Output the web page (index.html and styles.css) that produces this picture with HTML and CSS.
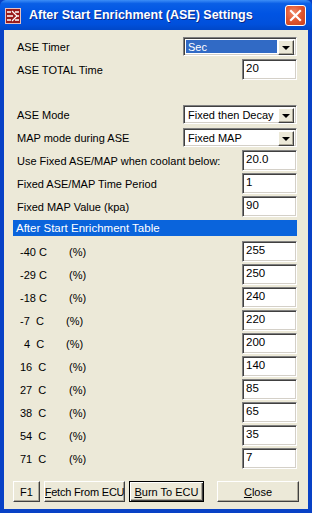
FILE: index.html
```html
<!DOCTYPE html>
<html>
<head>
<meta charset="utf-8">
<link rel="stylesheet" href="styles.css">
</head>
<body>
<div class="window">
  <div class="titlebar">
    <svg class="appicon" width="16" height="16" viewBox="0 0 16 16">
      <rect x="0" y="0" width="16" height="16" fill="#9b1c1c"/>
      <rect x="0.5" y="0.5" width="15" height="15" fill="none" stroke="#e8c0c0" stroke-width="1"/>
      <path d="M2 4h4M2 8h6M2 12h4M7 3l5 5-5 5M10 4h4M11 8h3M10 12h4" stroke="#fff" stroke-width="1.3" fill="none"/>
    </svg>
    <span class="title">After Start Enrichment (ASE) Settings</span>
    <div class="closebtn">
      <svg width="21" height="21" viewBox="0 0 21 21">
        <path d="M6 6l9 9M15 6l-9 9" stroke="#fff" stroke-width="2.2" stroke-linecap="square"/>
      </svg>
    </div>
  </div>
  <div class="body">
    <div class="row r-timer">
      <span class="label">ASE Timer</span>
      <div class="select wide selected"><span class="val">Sec</span><span class="drop"><i></i></span></div>
    </div>
    <div class="row r-total">
      <span class="label">ASE TOTAL Time</span>
      <div class="input">20</div>
    </div>
    <div class="row r-mode">
      <span class="label">ASE Mode</span>
      <div class="select wide"><span class="val">Fixed then Decay</span><span class="drop"><i></i></span></div>
    </div>
    <div class="row r-map">
      <span class="label">MAP mode during ASE</span>
      <div class="select wide"><span class="val">Fixed MAP</span><span class="drop"><i></i></span></div>
    </div>
    <div class="row r-field">
      <span class="label">Use Fixed ASE/MAP when coolant below:</span>
      <div class="input">20.0</div>
    </div>
    <div class="row r-field">
      <span class="label">Fixed ASE/MAP Time Period</span>
      <div class="input">1</div>
    </div>
    <div class="row r-field">
      <span class="label">Fixed MAP Value (kpa)</span>
      <div class="input">90</div>
    </div>
    <div class="header">After Start Enrichment Table</div>
    <div class="table">
      <div class="trow"><span class="temp">-40 C</span><span class="pct">(%)</span><div class="input">255</div></div>
      <div class="trow"><span class="temp">-29 C</span><span class="pct">(%)</span><div class="input">250</div></div>
      <div class="trow"><span class="temp">-18 C</span><span class="pct">(%)</span><div class="input">240</div></div>
      <div class="trow"><span class="temp">-7&nbsp; C</span><span class="pct short">(%)</span><div class="input">220</div></div>
      <div class="trow"><span class="temp ind">4&nbsp; C</span><span class="pct short">(%)</span><div class="input">200</div></div>
      <div class="trow"><span class="temp">16&nbsp; C</span><span class="pct">(%)</span><div class="input">140</div></div>
      <div class="trow"><span class="temp">27&nbsp; C</span><span class="pct">(%)</span><div class="input">85</div></div>
      <div class="trow"><span class="temp">38&nbsp; C</span><span class="pct">(%)</span><div class="input">65</div></div>
      <div class="trow"><span class="temp">54&nbsp; C</span><span class="pct">(%)</span><div class="input">35</div></div>
      <div class="trow"><span class="temp">71&nbsp; C</span><span class="pct">(%)</span><div class="input">7</div></div>
    </div>
    <div class="buttons">
      <div class="btn b-f1">F1</div>
      <div class="btn b-fetch"><u>F</u>etch From ECU</div>
      <div class="btn b-burn default"><u>B</u>urn To ECU</div>
      <div class="btn b-close"><u>C</u>lose</div>
    </div>
  </div>
</div>
</body>
</html>
```
FILE: styles.css
```css
* { box-sizing: border-box; }
html, body {
  margin: 0;
  padding: 0;
  width: 312px;
  height: 513px;
  overflow: hidden;
  background: #ece9d8;
}
body {
  font-family: "Liberation Sans", Arial, sans-serif;
  font-size: 11px;
  color: #000;
}
.window {
  width: 312px;
  height: 513px;
  display: flex;
  flex-direction: column;
  background: #0841c6;
}
.titlebar {
  height: 30px;
  flex: none;
  display: flex;
  align-items: center;
  padding: 0 6px 0 5px;
  background: linear-gradient(#3d8ef7 0%, #0a5fe6 12%, #0054e3 45%, #0050dc 80%, #0047c8 100%);
  border-radius: 6px 6px 0 0;
}
.appicon { flex: none; margin-top: 1px; }
.title {
  flex: 1;
  margin-left: 8px;
  color: #fff;
  font-weight: bold;
  font-size: 12.5px;
  text-shadow: 1px 1px 0 #0a2a8a;
  white-space: nowrap;
}
.closebtn {
  width: 21px;
  height: 21px;
  border: 1px solid #fff;
  border-radius: 3px;
  background: radial-gradient(circle at 40% 35%, #f08a6a 0%, #e0552e 50%, #c8401c 100%);
  display: flex;
  align-items: center;
  justify-content: center;
}
.closebtn svg { display: block; margin: -1px; }
.body {
  flex: 1;
  margin: 0 4px 4px 4px;
  background: #ece9d8;
  padding: 7px 11px 0 9px;
  display: flex;
  flex-direction: column;
}
.row {
  display: flex;
  align-items: center;
  justify-content: space-between;
}
.label { padding-left: 4px; white-space: nowrap; }
.r-timer { height: 19px; }
.r-total { height: 21px; margin-top: 3px; }
.r-mode { height: 19px; margin-top: 25px; }
.r-map { height: 19px; margin-top: 4px; }
.r-field { height: 21px; margin-top: 2px; }
.r-map + .r-field { margin-top: 3px; }

.input {
  width: 55px;
  height: 21px;
  background: #fff;
  border-top: 1px solid #808080;
  border-left: 1px solid #808080;
  border-bottom: 1px solid #fff;
  border-right: 1px solid #fff;
  box-shadow: inset 1px 1px 0 #404040, inset -1px -1px 0 #d4d0c8;
  padding: 1px 0 0 3px;
  font-size: 11.5px;
  line-height: 15px;
}
.select {
  width: 114px;
  height: 19px;
  background: #fff;
  border-top: 1px solid #808080;
  border-left: 1px solid #808080;
  border-bottom: 1px solid #fff;
  border-right: 1px solid #fff;
  box-shadow: inset 1px 1px 0 #404040, inset -1px -1px 0 #d4d0c8;
  display: flex;
  padding: 2px;
  font-size: 11px;
}
.select .val {
  flex: 1;
  line-height: 15px;
  padding-left: 2px;
  white-space: nowrap;
  overflow: hidden;
}
.select.selected .val {
  background: #316ac5;
  color: #fff;
  margin-right: 1px;
}
.drop {
  flex: none;
  width: 16px;
  height: 15px;
  background: #ece9d8;
  border-top: 1px solid #fff;
  border-left: 1px solid #fff;
  border-right: 1px solid #404040;
  border-bottom: 1px solid #404040;
  box-shadow: inset -1px -1px 0 #aca899;
  display: flex;
  align-items: center;
  justify-content: center;
}
.drop i {
  width: 0;
  height: 0;
  border-left: 4px solid transparent;
  border-right: 4px solid transparent;
  border-top: 4px solid #000;
  margin-top: 1px;
}
.header {
  margin-top: 3px;
  height: 16px;
  background: #0a64dc;
  color: #fff;
  padding-left: 3px;
  line-height: 16px;
  font-size: 11.5px;
}
.table {
  margin-top: 5px;
  display: flex;
  flex-direction: column;
  gap: 2px;
}
.trow {
  display: flex;
  align-items: center;
  height: 21px;
}
.temp {
  width: 56px;
  padding-left: 7px;
  white-space: nowrap;
}
.temp.ind { padding-left: 11px; }
.pct { width: 20px; }
.pct.short { margin-left: -3px; margin-right: 3px; }
.trow .input { margin-left: auto; }
.buttons {
  margin-top: 12px;
  display: flex;
  align-items: center;
  height: 21px;
}
.btn {
  flex: none;
  height: 21px;
  background: #ece9d8;
  border-top: 1px solid #fff;
  border-left: 1px solid #fff;
  border-right: 1px solid #404040;
  border-bottom: 1px solid #404040;
  box-shadow: inset -1px -1px 0 #aca899;
  display: flex;
  align-items: center;
  justify-content: center;
  font-size: 11px;
  white-space: nowrap;
  overflow: hidden;
}
.btn u { text-decoration: underline; }
.b-f1 { width: 27px; }
.b-fetch { width: 81px; margin-left: 4px; letter-spacing: -0.2px; }
.b-burn { width: 75px; margin-left: 4px; }
.b-close { width: 82px; margin-left: 13px; }
.btn.default {
  border: 1px solid #000;
  box-shadow: inset 1px 1px 0 #fff, inset -1px -1px 0 #404040, inset -2px -2px 0 #aca899;
}
```
